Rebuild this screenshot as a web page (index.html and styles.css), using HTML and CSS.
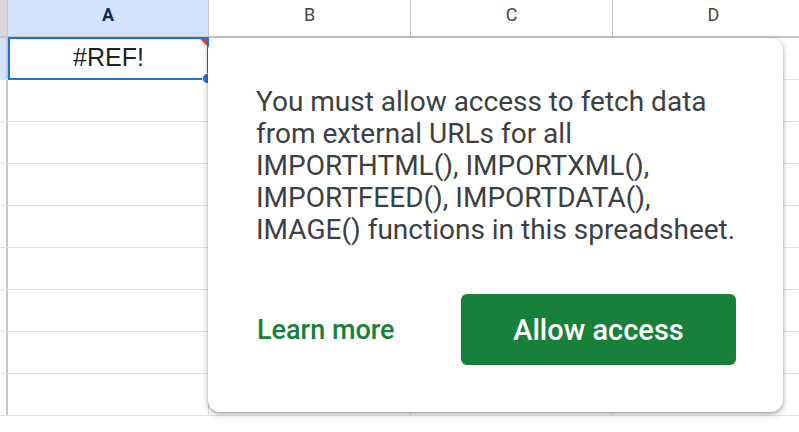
FILE: index.html
```html
<!DOCTYPE html>
<html lang="en">
<head>
    <meta charset="UTF-8">
    <title>Sheet</title>
    <link rel="stylesheet" href="styles.css">
</head>
<body>

<div class="sheet">
    <div class="head-row">
        <div class="corner"></div>
        <div class="col-head active">A</div>
        <div class="col-head">B</div>
        <div class="col-head">C</div>
        <div class="col-head">D</div>
        <div class="col-head"></div>
    </div>

    <div class="row">
        <div class="row-head active"></div>
        <div class="cell selected">#REF!<span class="err-mark"></span><span class="handle"></span></div>
        <div class="cell"></div>
        <div class="cell"></div>
        <div class="cell"></div>
        <div class="cell"></div>
    </div>
    <div class="row"><div class="row-head"></div><div class="cell"></div><div class="cell"></div><div class="cell"></div><div class="cell"></div><div class="cell"></div></div>
    <div class="row"><div class="row-head"></div><div class="cell"></div><div class="cell"></div><div class="cell"></div><div class="cell"></div><div class="cell"></div></div>
    <div class="row"><div class="row-head"></div><div class="cell"></div><div class="cell"></div><div class="cell"></div><div class="cell"></div><div class="cell"></div></div>
    <div class="row"><div class="row-head"></div><div class="cell"></div><div class="cell"></div><div class="cell"></div><div class="cell"></div><div class="cell"></div></div>
    <div class="row"><div class="row-head"></div><div class="cell"></div><div class="cell"></div><div class="cell"></div><div class="cell"></div><div class="cell"></div></div>
    <div class="row"><div class="row-head"></div><div class="cell"></div><div class="cell"></div><div class="cell"></div><div class="cell"></div><div class="cell"></div></div>
    <div class="row"><div class="row-head"></div><div class="cell"></div><div class="cell"></div><div class="cell"></div><div class="cell"></div><div class="cell"></div></div>
    <div class="row"><div class="row-head"></div><div class="cell"></div><div class="cell"></div><div class="cell"></div><div class="cell"></div><div class="cell"></div></div>
</div>

<!-- Окно с запросом доступа -->
<div class="popup">
    <p class="popup-text">You must allow access to fetch data from external URLs for all IMPORTHTML(), IMPORTXML(), IMPORTFEED(), IMPORTDATA(), IMAGE() functions in this spreadsheet.</p>
    <div class="popup-actions">
        <a class="learn-more" href="#">Learn more</a>
        <button class="allow-btn">Allow access</button>
    </div>
</div>

</body>
</html>
```

FILE: styles.css
```css
body {
    margin: 0;
    padding: 0;
    font-family: Roboto, Arial, sans-serif;
    background: #fff;
    overflow: hidden;
    width: 799px;
    height: 432px;
    position: relative;
}
.sheet {
    width: 799px;
}
.head-row, .row {
    display: grid;
    grid-template-columns: 8px 201px 202px 202px 202px 1fr;
}
.head-row {
    height: 36px;
    border-bottom: 2px solid #c4c7c5;
}
.corner {
    background: #d9d9d9;
    border-right: 1px solid #c4c7c5;
}
.col-head {
    display: flex;
    align-items: center;
    justify-content: center;
    padding-bottom: 8px;
    font-size: 18px;
    color: #444746;
    border-right: 1px solid #c4c7c5;
}
.col-head.active {
    background: #d3e3fd;
    color: #0b2d5b;
    font-weight: bold;
}
.row {
    height: 41px;
    border-bottom: 1px solid #e1e1e1;
}
.row-head {
    border-right: 2px solid #c4c7c5;
}
.row-head.active {
    background: #d3e3fd;
}
.cell {
    border-right: 1px solid #e1e1e1;
    position: relative;
}
.cell.selected {
    border: 2px solid #1a73e8;
    margin: -1px 0 -1px 0;
    padding-bottom: 3px;
    display: flex;
    align-items: center;
    justify-content: center;
    font-family: Arial, sans-serif;
    font-size: 25px;
    color: #202124;
}
.err-mark {
    position: absolute;
    top: 0;
    right: 0;
    width: 0;
    height: 0;
    border-top: 7px solid #e53935;
    border-left: 7px solid transparent;
}
.handle {
    position: absolute;
    right: -6px;
    bottom: -6px;
    width: 9px;
    height: 9px;
    background: #1a73e8;
    border: 1px solid #fff;
    border-radius: 50%;
}
.popup {
    position: absolute;
    left: 208px;
    top: 38px;
    width: 575px;
    height: 374px;
    box-sizing: border-box;
    background: #fff;
    border-radius: 12px;
    box-shadow: 0 2px 6px rgba(0, 0, 0, 0.3), 0 1px 2px rgba(0, 0, 0, 0.2);
    padding: 48px 47px 0 48px;
}
.popup-text {
    margin: 0;
    font-size: 28px;
    line-height: 32px;
    color: #3c4043;
    width: 486px;
}
.popup-actions {
    display: flex;
    align-items: center;
    justify-content: space-between;
    margin-top: 48px;
}
.learn-more {
    color: #188038;
    text-decoration: none;
    font-size: 27px;
    font-weight: 500;
    margin-left: 1px;
}
.allow-btn {
    width: 275px;
    height: 71px;
    background: #188038;
    color: #fff;
    border: none;
    border-radius: 6px;
    font-family: Roboto, Arial, sans-serif;
    font-size: 29px;
    font-weight: 500;
}
```
